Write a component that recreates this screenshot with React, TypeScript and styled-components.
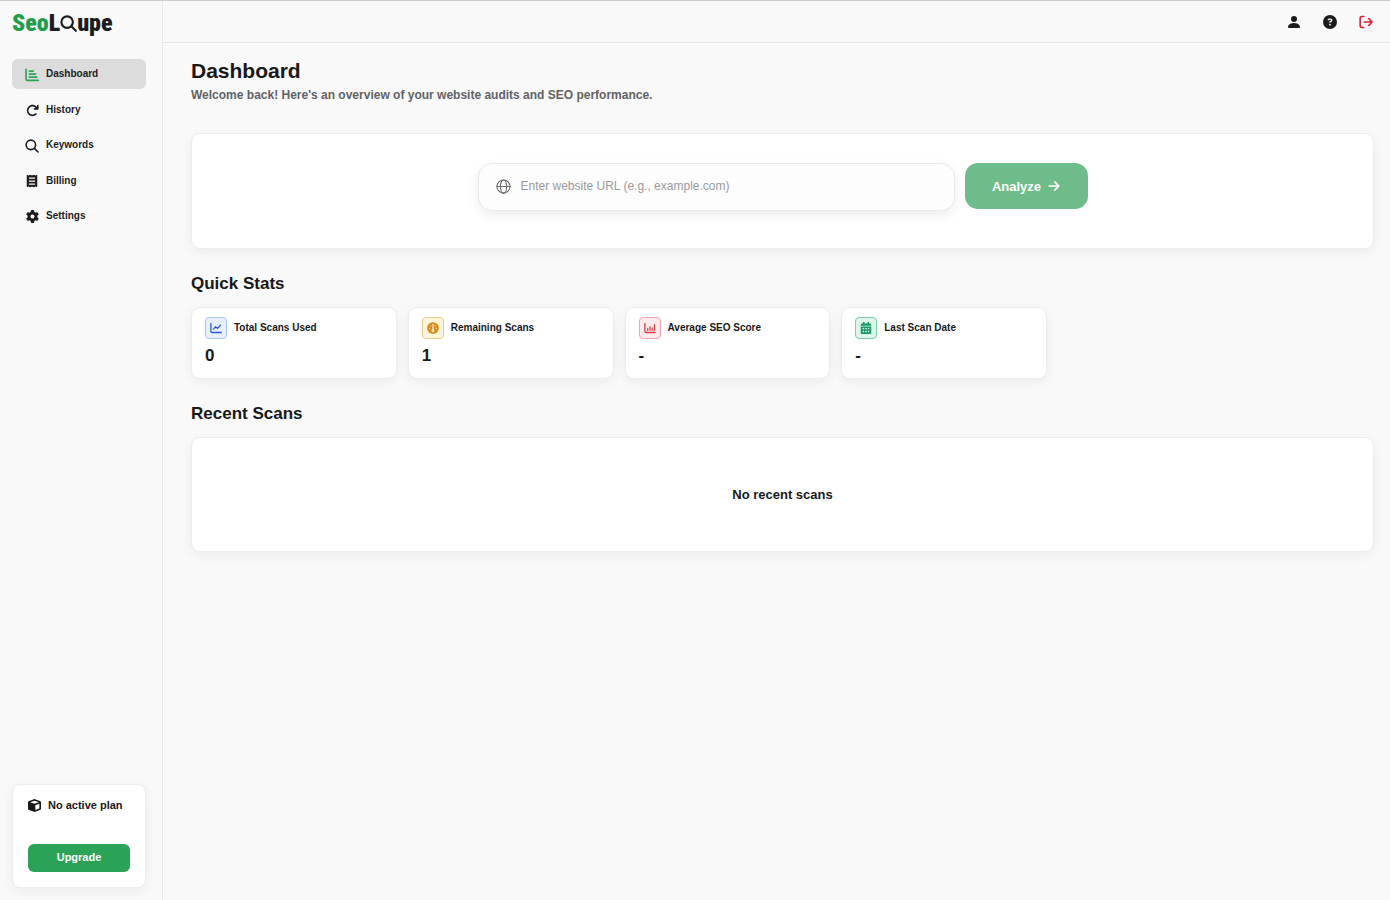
import React from 'react';
import styled, { createGlobalStyle } from 'styled-components';
import { FaArrowRotateRight, FaCircleQuestion, FaCube, FaGear } from 'react-icons/fa6';
import { BsPersonFill } from 'react-icons/bs';

const Global = createGlobalStyle`
  * { box-sizing: border-box; }
  body {
    margin: 0;
    background: #f9f9f9;
    color: #18181a;
    font-family: "Liberation Sans", Arial, Helvetica, sans-serif;
  }
  h1, h2, p { margin: 0; }
  button, input { font: inherit; }
`;

const Shell = styled.div`
  display: flex;
  min-height: 100vh;
  border-top: 1px solid #cdcdcd;
`;

const Sidebar = styled.aside`
  display: flex;
  flex-direction: column;
  flex: 0 0 163px;
  padding: 9px 16px 12px 12px;
  border-right: 1px solid #e8e8e8;
`;

const Logo = styled.a`
  display: flex;
  align-items: center;
  height: 26px;
  color: #1c1c1e;
  font-family: "Liberation Sans Narrow", "Roboto Condensed", "Liberation Sans", sans-serif;
  font-size: 24px;
  font-weight: 900;
  line-height: 26px;
  text-decoration: none;
`;

const LogoAccent = styled.span`
  color: #1f9d4d;
`;

const Nav = styled.nav`
  display: flex;
  flex-direction: column;
  justify-content: space-between;
  height: 172px;
  margin-top: 23px;
`;

const NavItem = styled.a<{ $active?: boolean }>`
  display: flex;
  align-items: center;
  gap: 7px;
  height: 30px;
  padding: 0 13px;
  border-radius: 6px;
  background: ${({ $active }) => ($active ? '#dcdcdc' : 'transparent')};
  color: #1c1c1e;
  font-size: 10px;
  font-weight: 700;
  line-height: 28px;
  text-decoration: none;
`;

const NavIcon = styled.span<{ $active?: boolean }>`
  display: grid;
  place-items: center;
  width: 14px;
  height: 14px;
  margin-top: 1px;
  color: ${({ $active }) => ($active ? '#2aa45a' : '#1c1c1e')};
`;

const PlanCard = styled.section`
  margin-top: auto;
  padding: 11px 15px 15px;
  border: 1px solid #ececec;
  border-radius: 8px;
  background: #fff;
  box-shadow: 0 3px 12px rgba(0, 0, 0, 0.06);
`;

const PlanName = styled.p`
  display: flex;
  align-items: center;
  gap: 7px;
  margin-bottom: 30px;
  font-size: 11px;
  font-weight: 700;
  line-height: 18px;

  svg { flex: none; }
`;

const UpgradeButton = styled.button`
  display: block;
  width: 100%;
  height: 28px;
  padding: 0 0 2px;
  border: 0;
  border-radius: 6px;
  background: #2aa356;
  color: #fff;
  font-size: 11px;
  font-weight: 700;
`;

const Column = styled.div`
  flex: 1;
  min-width: 0;
`;

const Topbar = styled.header`
  display: flex;
  align-items: center;
  justify-content: flex-end;
  gap: 20px;
  height: 42px;
  padding-right: 16px;
  border-bottom: 1px solid #e6e6e6;
`;

const IconButton = styled.button<{ $danger?: boolean }>`
  display: grid;
  place-items: center;
  width: 16px;
  height: 16px;
  padding: 0;
  border: 0;
  background: none;
  color: ${({ $danger }) => ($danger ? '#dc2033' : '#1c1c1e')};
`;

const Main = styled.main`
  padding: 16px 16px 32px 28px;
`;

const Title = styled.h1`
  font-size: 21px;
  line-height: 24px;
`;

const Subtitle = styled.p`
  margin-top: 3px;
  color: #626264;
  font-size: 12px;
  font-weight: 700;
  line-height: 18px;
`;

const SectionTitle = styled.h2`
  margin: 24px 0 12px;
  font-size: 17px;
  line-height: 22px;
`;

const Panel = styled.section`
  border: 1px solid #ececec;
  border-radius: 9px;
  background: #fff;
  box-shadow: 0 3px 12px rgba(0, 0, 0, 0.06);
`;

const ScanPanel = styled(Panel)`
  min-height: 116px;
  margin-top: 29px;
  padding: 29px 24px;
`;

const EmptyPanel = styled(Panel)`
  display: grid;
  place-items: center;
  min-height: 115px;
  font-size: 13px;
  font-weight: 700;
`;

const ScanForm = styled.form`
  display: flex;
  align-items: flex-start;
  gap: 10px;
  max-width: 610px;
  margin: 0 auto;
`;

const UrlField = styled.label`
  display: flex;
  flex: 1;
  align-items: center;
  gap: 10px;
  height: 48px;
  padding: 0 17px 2px;
  border: 1px solid #e9e9e9;
  border-radius: 14px;
  background: #fdfdfd;
  color: #6c6c6e;
  box-shadow: 0 4px 12px rgba(0, 0, 0, 0.08);
`;

const UrlInput = styled.input`
  flex: 1;
  min-width: 0;
  padding: 0;
  border: 0;
  outline: 0;
  background: none;
  color: #1c1c1e;
  font-size: 12px;

  &::placeholder { color: #9a9a9c; opacity: 1; }
`;

const AnalyzeButton = styled.button`
  display: flex;
  align-items: center;
  justify-content: center;
  gap: 7px;
  width: 123px;
  height: 46px;
  padding: 0;
  border: 0;
  border-radius: 13px;
  background: #6dbc8a;
  color: #fff;
  font-size: 13px;
  font-weight: 700;
`;

const Stats = styled.div`
  display: grid;
  grid-template-columns: repeat(4, 1fr);
  gap: 11px;
  max-width: 856px;
`;

const StatCard = styled(Panel)`
  padding: 9px 13px 10px;
`;

const StatHead = styled.div`
  display: flex;
  align-items: center;
  gap: 7px;
  font-size: 10px;
  font-weight: 700;
  line-height: 20px;
`;

const Badge = styled.span<{ $ink: string; $line: string; $fill: string }>`
  display: grid;
  place-items: center;
  width: 22px;
  height: 22px;
  border: 1px solid ${({ $line }) => $line};
  border-radius: 4px;
  background: ${({ $fill }) => $fill};
  color: ${({ $ink }) => $ink};
`;

const StatValue = styled.p`
  margin-top: 5px;
  font-size: 17px;
  font-weight: 700;
  line-height: 24px;
`;

type IconProps = { size: number; children: React.ReactNode; stroke?: number };

const LineIcon = ({ size, children, stroke = 1.5 }: IconProps) => (
  <svg width={size} height={size} viewBox="0 0 16 16" fill="none" stroke="currentColor"
    strokeWidth={stroke} strokeLinecap="round" strokeLinejoin="round" aria-hidden="true">
    {children}
  </svg>
);

const BarsIcon = () => (
  <LineIcon size={14} stroke={1.9}>
    <path d="M1.2 1.5v11.2q0 1.500 1.500 1.500H15.200M5 3.500h4.500M5 7h7M5 10.500h8.500" />
  </LineIcon>
);

const SearchIcon = ({ size, stroke = 1.8 }: { size: number; stroke?: number }) => (
  <LineIcon size={size} stroke={stroke}>
    <circle cx="6.7" cy="6.7" r="5.4" />
    <path d="M10.700 10.700l4.200 4.200" />
  </LineIcon>
);

const ReceiptIcon = () => (
  <svg width="14" height="14" viewBox="0 0 16 16" fill="currentColor" aria-hidden="true">
    <path fillRule="evenodd" d="M2 .8l2 1 2-1 2 1 2-1 2 1 2-1v14.400l-2-1-2 1-2-1-2 1-2-1-2 1zM4.500 4v1.400h7V4zm0 3.400v1.400h7V7.400zm0 3.400v1.400h7v-1.400z" />
  </svg>
);

const LogoutIcon = () => (
  <LineIcon size={14} stroke={1.8}>
    <path d="M5.500 1.800H3Q1.300 1.800 1.300 3.500v9q0 1.700 1.700 1.700h2.500M5.800 8H15M11.200 4.200L15 8l-3.800 3.800" />
  </LineIcon>
);

const GlobeIcon = () => (
  <LineIcon size={15} stroke={1.2}>
    <circle cx="8" cy="8" r="7" />
    <ellipse cx="8" cy="8" rx="3.3" ry="7" />
    <path d="M1 8h14" />
  </LineIcon>
);

const ArrowIcon = () => (
  <LineIcon size={12} stroke={2.2}>
    <path d="M1.500 8h13M9 2.500L14.500 8 9 13.500" />
  </LineIcon>
);

const LineChartIcon = () => (
  <LineIcon size={12} stroke={1.7}>
    <path d="M1.200 2v10.500q0 1.500 1.500 1.500H15M4.500 9.500l3-3.200 2.500 2.200 4-4.200" />
  </LineIcon>
);

const GaugeIcon = () => (
  <svg width="12" height="12" viewBox="0 0 16 16" aria-hidden="true">
    <circle cx="8" cy="8" r="7.8" fill="currentColor" />
    <g fill="none" stroke="#fff3d6" strokeWidth="1.4" strokeLinecap="round">
      <path d="M8 3v7" />
      <circle cx="8" cy="11.400" r="1.3" />
      <path d="M3.600 8.300h.1M12.300 8.300h.1M5 4.900h.1M11 4.900h.1" />
    </g>
  </svg>
);

const ColumnChartIcon = () => (
  <LineIcon size={12} stroke={1.7}>
    <path d="M1.200 2v10.500q0 1.500 1.500 1.500H15M5 8.500V11M8 6.500V11M11 8V11M14 3.500V11" />
  </LineIcon>
);

const CalendarIcon = () => (
  <svg width="12" height="12" viewBox="0 0 16 16" fill="currentColor" aria-hidden="true">
    <path fillRule="evenodd" d="M4 0h2v2h4V0h2v2h1.500Q15 2 15 3.500V5H1V3.500Q1 2 2.500 2H4zM1 6h14v8.500Q15 16 13.500 16h-11Q1 16 1 14.500zm2.500 2v1.800h2V8zm3.500 0v1.800h2V8zm3.500 0v1.800h2V8zm-7 3.700v1.800h2v-1.800zm3.500 0v1.800h2v-1.800zm3.500 0v1.800h2v-1.800z" />
  </svg>
);

const navItems = [
  { label: 'Dashboard', icon: <BarsIcon />, active: true },
  { label: 'History', icon: <FaArrowRotateRight size={13} /> },
  { label: 'Keywords', icon: <SearchIcon size={14} /> },
  { label: 'Billing', icon: <ReceiptIcon /> },
  { label: 'Settings', icon: <FaGear size={13} /> },
];

const stats = [
  { label: 'Total Scans Used', value: '0', icon: <LineChartIcon />, ink: '#3157dc', line: '#a9c3ee', fill: '#e7f0fd' },
  { label: 'Remaining Scans', value: '1', icon: <GaugeIcon />, ink: '#d98c1c', line: '#eccb87', fill: '#fdf4d9' },
  { label: 'Average SEO Score', value: '-', icon: <ColumnChartIcon />, ink: '#d93a4b', line: '#efa3aa', fill: '#fdeaeb' },
  { label: 'Last Scan Date', value: '-', icon: <CalendarIcon />, ink: '#189866', line: '#79cba9', fill: '#dcf6ea' },
];

export default function App() {
  return (
    <>
      <Global />
      <Shell>
        <Sidebar>
          <Logo href="#" aria-label="SeoLoupe">
            <LogoAccent>Seo</LogoAccent>L<SearchIcon size={17} stroke={2} />upe
          </Logo>
          <Nav>
            {navItems.map(({ label, icon, active }) => (
              <NavItem key={label} href="#" $active={active}>
                <NavIcon $active={active}>{icon}</NavIcon>
                {label}
              </NavItem>
            ))}
          </Nav>
          <PlanCard>
            <PlanName><FaCube size={13} />No active plan</PlanName>
            <UpgradeButton type="button">Upgrade</UpgradeButton>
          </PlanCard>
        </Sidebar>
        <Column>
          <Topbar>
            <IconButton type="button" aria-label="Account"><BsPersonFill size={16} /></IconButton>
            <IconButton type="button" aria-label="Help"><FaCircleQuestion size={14} /></IconButton>
            <IconButton type="button" aria-label="Log out" $danger><LogoutIcon /></IconButton>
          </Topbar>
          <Main>
            <Title>Dashboard</Title>
            <Subtitle>Welcome back! Here's an overview of your website audits and SEO performance.</Subtitle>
            <ScanPanel>
              <ScanForm onSubmit={(event) => event.preventDefault()}>
                <UrlField>
                  <GlobeIcon />
                  <UrlInput type="text" aria-label="Website URL" placeholder="Enter website URL (e.g., example.com)" />
                </UrlField>
                <AnalyzeButton type="submit">Analyze <ArrowIcon /></AnalyzeButton>
              </ScanForm>
            </ScanPanel>
            <SectionTitle>Quick Stats</SectionTitle>
            <Stats>
              {stats.map(({ label, value, icon, ink, line, fill }) => (
                <StatCard key={label}>
                  <StatHead>
                    <Badge $ink={ink} $line={line} $fill={fill}>{icon}</Badge>
                    {label}
                  </StatHead>
                  <StatValue>{value}</StatValue>
                </StatCard>
              ))}
            </Stats>
            <SectionTitle>Recent Scans</SectionTitle>
            <EmptyPanel>No recent scans</EmptyPanel>
          </Main>
        </Column>
      </Shell>
    </>
  );
}
